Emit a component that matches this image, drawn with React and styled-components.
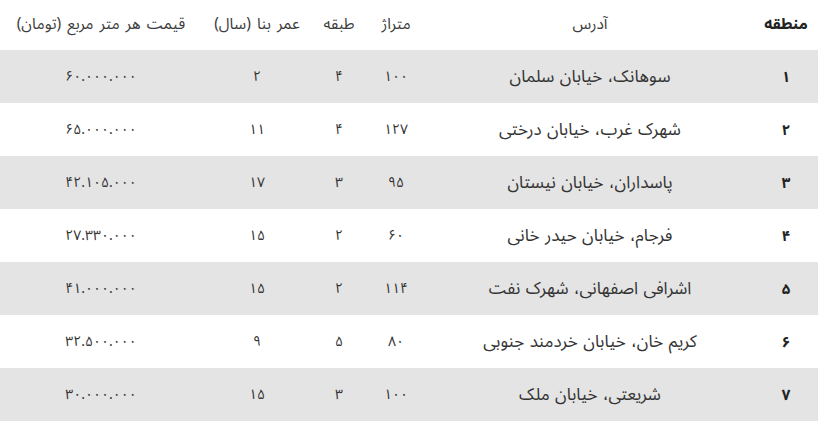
import React from 'react'
import styled, { createGlobalStyle } from 'styled-components'

const GlobalStyle = createGlobalStyle`
  html, body {
    margin: 0;
    padding: 0;
    background: #fff;
  }
  body {
    font-family: 'Noto Sans Arabic', 'Noto Sans', 'DejaVu Sans', sans-serif;
    color: #333;
  }
`

const columns = [
  { title: 'منطقه', width: 64 },
  { title: 'آدرس', width: 328 },
  { title: 'متراژ', width: 60 },
  { title: 'طبقه', width: 54 },
  { title: 'عمر بنا (سال)', width: 110 },
  { title: 'قیمت هر متر مربع (تومان)', width: 202 },
]

const rows = [
  ['۱', 'سوهانک، خیابان سلمان', '۱۰۰', '۴', '۲', '۶۰.۰۰۰.۰۰۰'],
  ['۲', 'شهرک غرب، خیابان درختی', '۱۲۷', '۴', '۱۱', '۶۵.۰۰۰.۰۰۰'],
  ['۳', 'پاسداران، خیابان نیستان', '۹۵', '۳', '۱۷', '۴۲.۱۰۵.۰۰۰'],
  ['۴', 'فرجام، خیابان حیدر خانی', '۶۰', '۲', '۱۵', '۲۷.۳۳۰.۰۰۰'],
  ['۵', 'اشرافی اصفهانی، شهرک نفت', '۱۱۴', '۲', '۱۵', '۴۱.۰۰۰.۰۰۰'],
  ['۶', 'کریم خان، خیابان خردمند جنوبی', '۸۰', '۵', '۹', '۳۲.۵۰۰.۰۰۰'],
  ['۷', 'شریعتی، خیابان ملک', '۱۰۰', '۳', '۱۵', '۳۰.۰۰۰.۰۰۰'],
]

const kindOf = (j) => (j === 0 ? 'id' : j === 1 ? 'text' : 'num')

const App = () => {
  return (
    <>
      <GlobalStyle />
      <Table>
        <colgroup>
          {columns.map((c) => (
            <col key={c.title} style={{ width: c.width }} />
          ))}
        </colgroup>
        <thead>
          <tr>
            {columns.map((c, i) => (
              <HeadCell key={c.title} strong={i === 0}>
                {c.title}
              </HeadCell>
            ))}
          </tr>
        </thead>
        <tbody>
          {rows.map((r, i) => (
            <Row key={r[0]} shaded={i % 2 === 0}>
              {r.map((v, j) => (
                <Cell key={j} kind={kindOf(j)}>
                  {v}
                </Cell>
              ))}
            </Row>
          ))}
        </tbody>
      </Table>
    </>
  )
}

export default App

const sizes = { id: '15px', text: '17px', num: '14px' }

const Table = styled.table`
  direction: rtl;
  width: 818px;
  border-collapse: collapse;
  table-layout: fixed;
`

const HeadCell = styled.th.withConfig({ shouldForwardProp: (p) => p !== 'strong' })`
  height: 48px;
  padding: 0 6px 2px;
  text-align: center;
  font-size: 15.5px;
  line-height: 20px;
  word-spacing: 2px;
  font-weight: ${(p) => (p.strong ? 700 : 400)};
  color: ${(p) => (p.strong ? '#222' : '#3c3c3c')};
  white-space: nowrap;
`

const Row = styled.tr.withConfig({ shouldForwardProp: (p) => p !== 'shaded' })`
  background: ${(p) => (p.shaded ? '#e4e4e4' : '#fff')};
`

const Cell = styled.td.withConfig({ shouldForwardProp: (p) => p !== 'kind' })`
  height: 53px;
  padding: 0 6px;
  text-align: center;
  line-height: 20px;
  font-size: ${(p) => sizes[p.kind]};
  word-spacing: ${(p) => (p.kind === 'text' ? '1px' : '0')};
  font-weight: ${(p) => (p.kind === 'id' ? 700 : 400)};
  color: ${(p) => (p.kind === 'id' ? '#222' : '#333')};
  white-space: nowrap;
`
